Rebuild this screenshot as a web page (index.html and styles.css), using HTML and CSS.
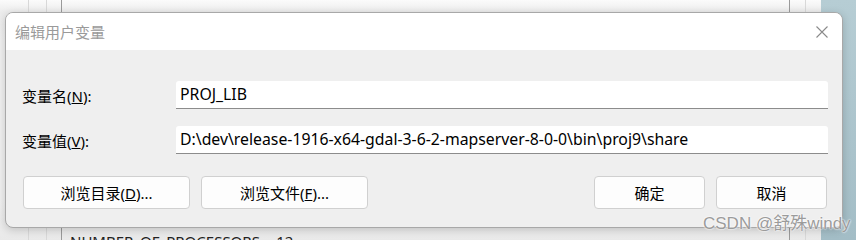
FILE: index.html
```html
<!DOCTYPE html>
<html lang="zh-CN">
<head>
    <meta charset="UTF-8">
    <title>编辑用户变量</title>
    <link rel="stylesheet" href="styles.css">
</head>
<body>
    <div class="desktop">
        <div class="behind">
            <span class="line l1"></span>
            <span class="line l2"></span>
            <span class="line l3 dark"></span>
            <span class="line l4 dark"></span>
            <span class="line l5"></span>
            <span class="behind-text">NUMBER_OF_PROCESSORS = 12</span>
        </div>
        <div class="sky"></div>

        <div class="dialog">
            <div class="titlebar">
                <span class="title">编辑用户变量</span>
                <svg class="close" width="12" height="12" viewBox="0 0 12 12">
                    <path d="M0.5 0.5 L11.5 11.5 M11.5 0.5 L0.5 11.5" stroke="#8a8a8a" stroke-width="1.1" fill="none"/>
                </svg>
            </div>
            <div class="content">
                <div class="row">
                    <label class="label">变量名(<u>N</u>):</label>
                    <div class="field">PROJ_LIB</div>
                </div>
                <div class="row">
                    <label class="label">变量值(<u>V</u>):</label>
                    <div class="field">D:\dev\release-1916-x64-gdal-3-6-2-mapserver-8-0-0\bin\proj9\share</div>
                </div>
                <div class="buttons">
                    <button class="btn wide">浏览目录(<u>D</u>)...</button>
                    <button class="btn wide">浏览文件(<u>F</u>)...</button>
                    <span class="spacer"></span>
                    <button class="btn">确定</button>
                    <button class="btn">取消</button>
                </div>
            </div>
        </div>

        <span class="watermark">CSDN @舒殊windy</span>
    </div>
</body>
</html>
```

FILE: styles.css
```css
body {
    margin: 0;
    padding: 0;
    font-family: "Noto Sans", "Noto Sans CJK SC", sans-serif;
    color: #000;
}

.desktop {
    position: relative;
    width: 856px;
    height: 240px;
    overflow: hidden;
    background: #a9c4cc;
}

/* window behind the dialog */
.behind {
    position: absolute;
    left: 0;
    top: 0;
    width: 821px;
    height: 240px;
    background: linear-gradient(#fbfbfb, #ececec 12px, #f0f0f0 40px, #f0f0f0 200px, #e9e9e9);
}

.line {
    position: absolute;
    top: 0;
    bottom: 0;
    width: 1px;
    background: #d8d8d8;
}

.line.dark {
    background: #9a9a9a;
}

.l1 { left: 28px; }
.l2 { left: 46px; }
.l3 { left: 61px; }
.l4 { left: 789px; }
.l5 { left: 805px; }

.behind-text {
    position: absolute;
    left: 70px;
    top: 231px;
    font-size: 15px;
    line-height: 20px;
    color: #222;
}

.sky {
    position: absolute;
    left: 821px;
    top: 0;
    right: 0;
    bottom: 0;
    background: linear-gradient(#b6cdd4, #a3bdc6);
}

.dialog {
    position: absolute;
    left: 5px;
    top: 12px;
    width: 836px;
    height: 214px;
    border: 1px solid #a8a8a8;
    border-radius: 8px;
    background: #efefef;
    overflow: hidden;
    box-shadow: 0 2px 8px rgba(0, 0, 0, 0.18);
}

.titlebar {
    height: 37px;
    background: #fff;
    display: flex;
    align-items: center;
    padding: 0 14px 0 9px;
}

.title {
    flex: 1;
    font-size: 15px;
    color: #9a9a9a;
}

.close {
    display: block;
}

.content {
    padding: 31px 14px 0 16px;
}

.row {
    display: flex;
    align-items: center;
    margin-bottom: 17px;
}

.row + .row {
    margin-bottom: 22px;
}

.label {
    width: 154px;
    font-size: 15px;
}

.field {
    flex: 1;
    height: 27px;
    line-height: 27px;
    padding: 0 4px;
    background: #fff;
    border-bottom: 1px solid #8c8c8c;
    border-radius: 3px 3px 0 0;
    font-size: 15.8px;
    white-space: nowrap;
}

.buttons {
    display: flex;
    gap: 11px;
    padding-left: 1px;
    padding-right: 1px;
}

.spacer {
    flex: 1;
}

.btn {
    width: 111px;
    height: 33px;
    background: #fdfdfd;
    border: 1px solid #d0d0d0;
    border-radius: 4px;
    font-family: "Noto Sans", "Noto Sans CJK SC", sans-serif;
    font-size: 15px;
    color: #000;
    padding: 0;
}

.btn.wide {
    width: 167px;
}

.watermark {
    position: absolute;
    left: 703px;
    top: 209px;
    font-family: "Liberation Sans", "Noto Sans CJK SC", sans-serif;
    font-size: 17px;
    color: #9b9b9b;
    text-shadow: 0 0 2px #fff, 0 0 2px #fff;
}
```
